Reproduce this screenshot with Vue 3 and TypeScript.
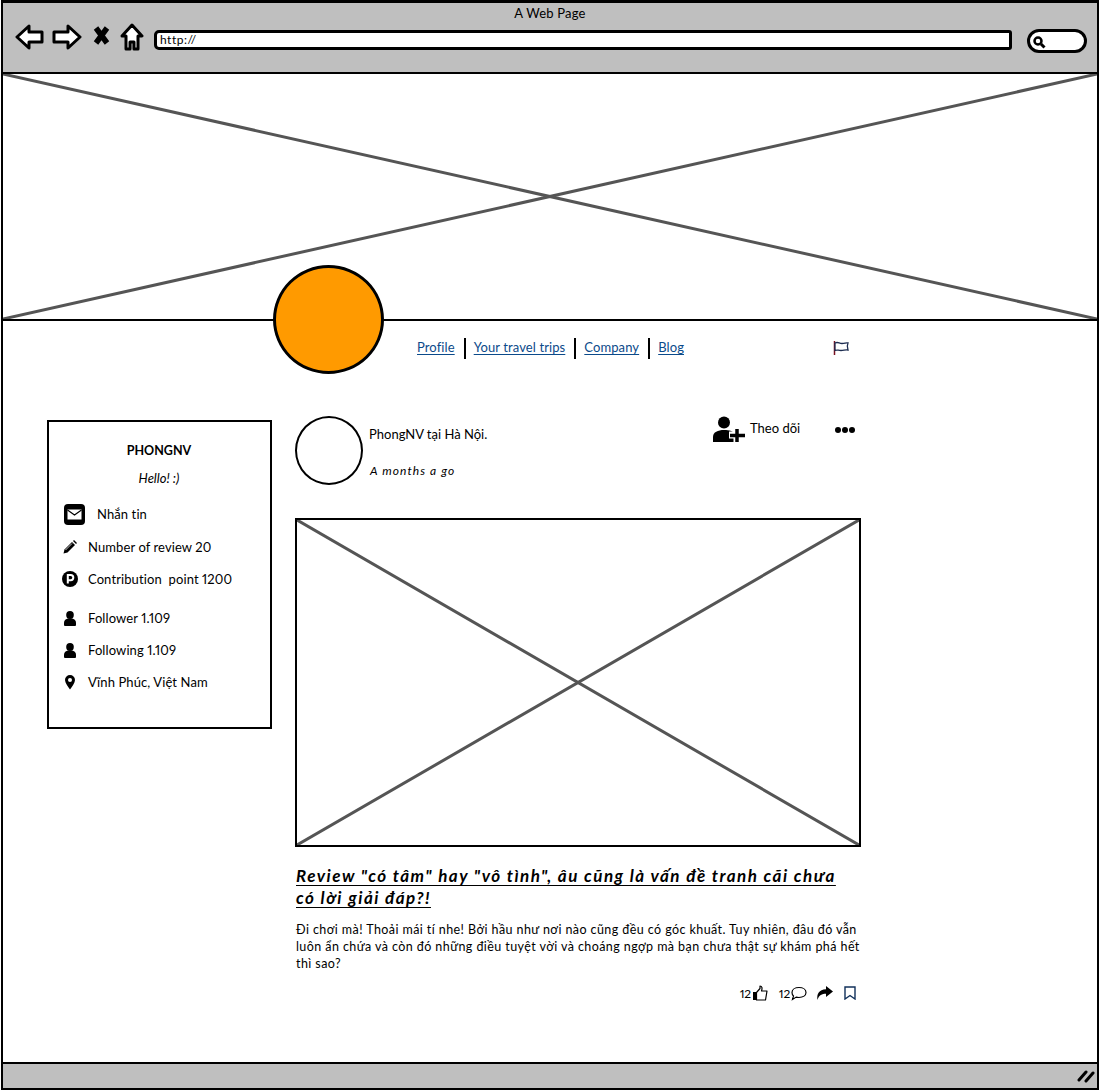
<script setup lang="ts">
const navLinks = ['Profile', 'Your travel trips', 'Company', 'Blog']
</script>

<template>
  <div class="window">
    <header class="chrome">
      <div class="page-title">A Web Page</div>
      <div class="toolbar">
        <svg class="tool" width="30" height="26" viewBox="0 0 30 26">
          <path d="M2 13 14 2v6h13v10H14v6z" fill="#fff" stroke="#000" stroke-width="3" stroke-linejoin="round" />
        </svg>
        <svg class="tool" width="30" height="26" viewBox="0 0 30 26">
          <path d="M28 13 16 2v6H2v10h14v6z" fill="#fff" stroke="#000" stroke-width="3" stroke-linejoin="round" />
        </svg>
        <svg class="tool stop" width="17" height="19" viewBox="0 0 17 19">
          <path d="M3 2 14 17M14 2 3 17" fill="none" stroke="#000" stroke-width="5.500" />
        </svg>
        <svg class="tool home" width="24" height="28" viewBox="0 0 24 28">
          <path d="M12 2 22 13h-4v13h-4v-7h-4v7H6V13H2z" fill="#fff" stroke="#000" stroke-width="3" stroke-linejoin="round" />
        </svg>
        <div class="url">http://</div>
        <div class="search">
          <svg width="14" height="14" viewBox="0 0 14 14">
            <circle cx="6" cy="6" r="3.500" fill="none" stroke="#000" stroke-width="2.500" />
            <path d="M9 9l3.500 3.500" stroke="#000" stroke-width="3" />
          </svg>
        </div>
      </div>
    </header>

    <div class="hero">
      <svg class="cross" viewBox="0 0 100 100" preserveAspectRatio="none">
        <path d="M0 0 100 100M100 0 0 100" stroke="#555" stroke-width="3" vector-effect="non-scaling-stroke" fill="none" />
      </svg>
    </div>

    <div class="page">
      <div class="cover-avatar"></div>

      <nav class="nav">
        <template v-for="(link, i) in navLinks" :key="link">
          <a class="nav-link" href="#">{{ link }}</a>
          <span v-if="i < navLinks.length - 1" class="nav-sep"></span>
        </template>
        <svg class="flag" width="17" height="14" viewBox="0 0 17 14">
          <path d="M1.500 0v14" stroke="#7a1020" stroke-width="1.500" />
          <path d="M2 2c3-1.500 4 .5 7 .5s4-1 6-.5c-1 2-1 4 0 7-3-.5-4 .5-7 .5s-4-1-6 0z" fill="#fff" stroke="#1c2c50" stroke-width="1.300" />
        </svg>
      </nav>

      <main class="content">
        <aside class="profile">
          <h2 class="name">PHONGNV</h2>
          <p class="hello">Hello! :)</p>
          <div class="row message">
            <svg width="21" height="21" viewBox="0 0 21 21">
              <rect width="21" height="21" rx="4" fill="#000" />
              <rect x="3.500" y="5.500" width="14" height="10" fill="#fff" />
              <path d="M3.500 6 10.500 11 17.500 6" fill="none" stroke="#000" stroke-width="1.200" />
            </svg>
            <span>Nhắn tin</span>
          </div>
          <div class="row">
            <svg width="16" height="16" viewBox="0 0 16 16">
              <path d="M1.500 14.500l1-4L10 3l3 3-7.500 7.500z" fill="#000" />
              <path d="M11 2l1-1 3 3-1 1z" fill="#000" />
              <path d="M3.500 11 10 4.500" stroke="#fff" stroke-width=".8" />
            </svg>
            <span>Number of review 20</span>
          </div>
          <div class="row">
            <svg width="16" height="16" viewBox="0 0 16 16">
              <circle cx="8" cy="8" r="8" fill="#000" />
              <path d="M5.800 12.500V4h2.900a2.500 2.500 0 0 1 0 5.200H5.800" fill="none" stroke="#fff" stroke-width="2" />
            </svg>
            <span>Contribution&nbsp; point 1200</span>
          </div>
          <div class="row gap-top">
            <svg width="16" height="16" viewBox="0 0 16 16">
              <ellipse cx="8" cy="5" rx="3.800" ry="4" fill="#000" />
              <path d="M2 15v-2.500C2 10 4 9 6 8.500h4c2 .5 4 1.500 4 4V15a1 1 0 0 1-1 1H3a1 1 0 0 1-1-1z" fill="#000" />
            </svg>
            <span>Follower 1.109</span>
          </div>
          <div class="row">
            <svg width="16" height="16" viewBox="0 0 16 16">
              <ellipse cx="8" cy="5" rx="3.800" ry="4" fill="#000" />
              <path d="M2 15v-2.500C2 10 4 9 6 8.500h4c2 .5 4 1.500 4 4V15a1 1 0 0 1-1 1H3a1 1 0 0 1-1-1z" fill="#000" />
            </svg>
            <span>Following 1.109</span>
          </div>
          <div class="row">
            <svg width="16" height="16" viewBox="0 0 16 16">
              <path d="M8 1a5 5 0 0 1 5 5c0 3-3 6.500-5 9.500C6 12.500 3 9 3 6a5 5 0 0 1 5-5z" fill="#000" />
              <circle cx="8" cy="6" r="2" fill="#fff" />
            </svg>
            <span>Vĩnh Phúc, Việt Nam</span>
          </div>
        </aside>

        <article class="post">
          <div class="post-head">
            <div class="post-avatar"></div>
            <div class="post-meta">
              <div>PhongNV tại Hà Nội.</div>
              <div class="ago">A months a go</div>
            </div>
            <div class="follow">
              <svg width="32" height="26" viewBox="0 0 32 26">
                <circle cx="11" cy="6.500" r="6" fill="#000" />
                <path d="M0 26v-5c0-5 5-7 11-7s8 1 10 3v9z" fill="#000" />
                <path d="M24 12v14M16 19h16" stroke="#fff" stroke-width="7" />
                <path d="M24 13v13M17 19.500h15" stroke="#000" stroke-width="3.500" />
              </svg>
              <span>Theo dõi</span>
            </div>
            <div class="dots"><i></i><i></i><i></i></div>
          </div>

          <div class="photo">
            <svg class="cross" viewBox="0 0 100 100" preserveAspectRatio="none">
              <path d="M0 0 100 100M100 0 0 100" stroke="#555" stroke-width="3" vector-effect="non-scaling-stroke" fill="none" />
            </svg>
          </div>

          <h1 class="title">Review "có tâm" hay "vô tình", âu cũng là vấn đề tranh cãi chưa<br />có lời giải đáp?!</h1>
          <p class="excerpt">
            Đi chơi mà! Thoải mái tí nhe! Bởi hầu như nơi nào cũng đều có góc khuất. Tuy nhiên, đâu đó vẫn<br />
            luôn ẩn chứa và còn đó những điều tuyệt vời và choáng ngợp mà bạn chưa thật sự khám phá hết<br />
            thì sao?
          </p>

          <div class="actions">
            <span>12</span>
            <svg class="like" width="16" height="16" viewBox="0 0 16 16">
              <path d="M1 7h3v8H1z" fill="#000" />
              <path d="M4.500 7.500 8 3.500V1c2 0 2.500 2 1.500 5H15l-1.500 9H4.500z" fill="#fff" stroke="#000" stroke-width="1.200" stroke-linejoin="round" />
            </svg>
            <span>12</span>
            <svg class="bubble" width="16" height="15" viewBox="0 0 16 15">
              <path d="M1 6.500C1 3.500 4 1.500 8 1.500s7 2 7 5-3 5-7 5c-1 0-2-.1-2.800-.4L1.500 13.500l1-3.500C1.500 9 1 8 1 6.500z" fill="#fff" stroke="#000" stroke-width="1.200" />
            </svg>
            <svg class="share" width="17" height="14" viewBox="0 0 17 14">
              <path d="M10 0l7 5.500-7 5.500V7.800C6 7.800 3 9 1.500 14 .5 8 3 3.500 10 3.200z" fill="#000" />
            </svg>
            <svg class="mark" width="12" height="14" viewBox="0 0 12 14">
              <path d="M1 1h10v12L6 9.500 1 13z" fill="#fff" stroke="#10305a" stroke-width="1.400" />
            </svg>
          </div>
        </article>
      </main>
    </div>

    <footer class="status">
      <svg width="18" height="14" viewBox="0 0 18 14">
        <path d="M2 11 9 3M9 12l7-8" stroke="#000" stroke-width="3" stroke-linecap="round" />
      </svg>
    </footer>
  </div>
</template>

<style>
html,
body {
  margin: 0;
  background: #fff;
}
</style>

<style scoped>
* {
  box-sizing: border-box;
}

.window {
  width: 1098px;
  height: 1090px;
  margin: 0 1px;
  border: 2px solid #000;
  border-top-width: 3px;
  display: flex;
  flex-direction: column;
  font-family: Lato, "Noto Sans", sans-serif;
  font-size: 13px;
  font-feature-settings: "pnum";
  color: #000;
  background: #fff;
}

.chrome {
  height: 71px;
  background: #bfbfbf;
  border-bottom: 2px solid #000;
  flex: none;
}

.page-title {
  text-align: center;
  font-size: 13px;
  line-height: 14px;
  padding-top: 3px;
  letter-spacing: 0.2px;
}

.toolbar {
  display: flex;
  align-items: center;
  margin-top: 3px;
  padding-left: 12px;
  height: 34px;
}

.tool {
  flex: none;
  margin-right: 7px;
  margin-bottom: 6px;
}

.stop {
  margin: 0 8px 10px 4px;
}

.home {
  margin: 0 10px 7px 2px;
}

.url {
  width: 858px;
  height: 20px;
  border: 3px solid #000;
  border-radius: 5px 3px 3px 5px;
  background: #fff;
  font-size: 12px;
  line-height: 14px;
  padding-left: 3px;
  letter-spacing: 0.5px;
}

.search {
  width: 60px;
  height: 24px;
  margin: 2px 0 0 15px;
  border: 3px solid #000;
  border-radius: 12px;
  background: #fff;
  padding: 3px 0 0 2px;
  display: flex;
}

.hero {
  position: relative;
  height: 247px;
  flex: none;
  border-bottom: 2px solid #000;
}

.cross {
  position: absolute;
  inset: 0;
  width: 100%;
  height: 100%;
}

.page {
  position: relative;
  flex: 1;
  min-height: 0;
}

.cover-avatar {
  position: absolute;
  left: 270px;
  top: -56px;
  width: 111px;
  height: 109px;
  border: 3px solid #000;
  border-radius: 50%;
  background: #ff9a00;
}

.nav {
  position: relative;
  display: flex;
  align-items: center;
  height: 22px;
  margin-top: 16px;
  padding-left: 414px;
}

.nav-link {
  color: #0b4a8a;
  text-decoration: underline;
  text-underline-offset: 2px;
  padding-bottom: 2px;
  letter-spacing: 0.1px;
}

.nav-sep {
  width: 2px;
  height: 21px;
  background: #000;
  margin: 0 8px 0 9px;
}

.flag {
  position: absolute;
  left: 830px;
  top: 4px;
}

.content {
  display: flex;
  align-items: flex-start;
  padding: 61px 0 0 44px;
}

.profile {
  width: 225px;
  height: 309px;
  border: 2px solid #000;
  margin-right: 23px;
  padding: 21px 0 0 13px;
}

.name {
  margin: 0 14px 0 0;
  font-size: 12.5px;
  line-height: 16px;
  font-weight: 700;
  text-align: center;
}

.hello {
  margin: 11px 14px 0 0;
  line-height: 16px;
  font-style: italic;
  font-size: 13px;
  text-align: center;
}

.row {
  display: flex;
  align-items: center;
  gap: 10px;
  height: 16px;
  margin-top: 16px;
  letter-spacing: 0.1px;
}

.row svg {
  flex: none;
}

.message {
  margin: 20px 0 17px;
  gap: 12px;
}

.message svg {
  margin-left: 2px;
}

.gap-top {
  margin-top: 23px;
}

.post {
  width: 566px;
}

.post-head {
  display: flex;
  height: 102px;
  margin-top: -4px;
}

.post-avatar {
  width: 68px;
  height: 69px;
  border: 2px solid #000;
  border-radius: 50%;
  flex: none;
  margin-right: 6px;
}

.post-meta {
  width: 344px;
  padding-top: 10px;
  line-height: 16px;
}

.ago {
  margin-top: 21px;
  margin-left: 1px;
  font-style: italic;
  font-size: 12px;
  letter-spacing: 1.1px;
}

.follow {
  display: flex;
  gap: 5px;
  width: 122px;
  line-height: 16px;
}

.follow span {
  margin-top: 4px;
}

.dots {
  display: flex;
  gap: 1px;
  height: 6px;
  margin-top: 11px;
}

.dots i {
  width: 6px;
  height: 6px;
  background: #000;
  border-radius: 50%;
}

.photo {
  position: relative;
  height: 329px;
  border: 2px solid #000;
}

.title {
  margin: 18px 0 0;
  padding-left: 1px;
  font-size: 17px;
  line-height: 22px;
  font-weight: 700;
  font-style: italic;
  letter-spacing: 1.48px;
  text-decoration: underline;
  text-underline-offset: 3px;
}

.excerpt {
  margin: 12px 0 0;
  padding-left: 1px;
  line-height: 17px;
  font-size: 12.5px;
  letter-spacing: 0.42px;
  white-space: nowrap;
}

.actions {
  display: flex;
  align-items: center;
  justify-content: flex-end;
  height: 18px;
  margin-top: 12px;
  padding-right: 5px;
  font-size: 12px;
  letter-spacing: -0.2px;
}

.like {
  margin: 0 11px 0 1px;
}

.bubble {
  margin-left: 1px;
}

.share {
  margin: 0 11px 0 9px;
}

.status {
  height: 26px;
  flex: none;
  background: #bfbfbf;
  border-top: 2px solid #000;
  display: flex;
  justify-content: flex-end;
  align-items: center;
  padding-right: 2px;
}
</style>
